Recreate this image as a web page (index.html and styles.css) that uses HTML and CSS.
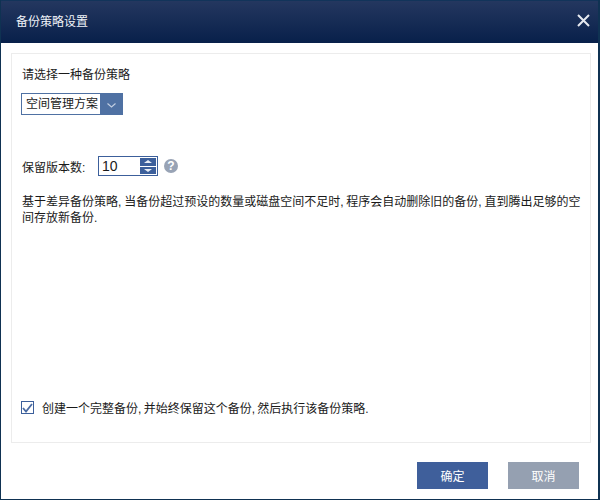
FILE: index.html
```html
<!DOCTYPE html>
<html lang="zh-CN">
<head>
  <meta charset="UTF-8" />
  <title>备份策略设置</title>
  <link rel="stylesheet" href="styles.css">
</head>
<body>
  <div class="dialog">
    <div class="title-bar">
      <span class="title">备份策略设置</span>
      <svg class="close" width="13" height="13" viewBox="0 0 13 13">
        <path d="M1 1L12 12M12 1L1 12" stroke="#e6e9ef" stroke-width="2" fill="none" />
      </svg>
    </div>
    <div class="body">
      <div class="panel">
        <p class="label">请选择一种备份策略</p>
        <div class="select">
          <span class="select-text">空间管理方案</span>
          <span class="select-btn">
            <svg width="9" height="5" viewBox="0 0 9 5">
              <path d="M0.5 0.5L4.5 4L8.5 0.5" stroke="#c3cfe2" stroke-width="1.1" fill="none" />
            </svg>
          </span>
        </div>
        <div class="version-row">
          <span class="version-label">保留版本数:</span>
          <div class="spin">
            <span class="spin-value">10</span>
            <span class="spin-btns">
              <span class="spin-btn"><span class="arrow-up"></span></span>
              <span class="spin-btn"><span class="arrow-down"></span></span>
            </span>
          </div>
          <span class="help">?</span>
        </div>
        <p class="desc">基于差异备份策略, 当备份超过预设的数量或磁盘空间不足时, 程序会自动删除旧的备份, 直到腾出足够的空间存放新备份.</p>
        <div class="check-row">
          <span class="checkbox">
            <svg width="11" height="10" viewBox="0 0 11 10">
              <path d="M1 5L4 8.5L10 1" stroke="#4a6ba3" stroke-width="1.8" fill="none" />
            </svg>
          </span>
          <span>创建一个完整备份, 并始终保留这个备份, 然后执行该备份策略.</span>
        </div>
      </div>
      <div class="footer">
        <button class="btn btn-ok">确定</button>
        <button class="btn btn-cancel">取消</button>
      </div>
    </div>
  </div>
</body>
</html>
```

FILE: styles.css
```css
html, body {
  margin: 0;
  padding: 0;
}
body {
  width: 600px;
  height: 500px;
  overflow: hidden;
  font-family: "Liberation Sans", "Noto Sans CJK SC", sans-serif;
  font-size: 12px;
  color: #1a1a1a;
}
.dialog {
  box-sizing: border-box;
  width: 600px;
  height: 500px;
  border: 1px solid #0f3252;
  border-top: 0;
  border-right-width: 2px;
  display: flex;
  flex-direction: column;
  background: #fff;
}
.title-bar {
  height: 43px;
  flex: none;
  display: flex;
  align-items: center;
  justify-content: space-between;
  padding: 0 8px 4px 15px;
  box-sizing: border-box;
  border-top: 1px solid #12345a;
  background: linear-gradient(#24375f, #08204a);
}
.title {
  color: #f0f3f8;
  font-size: 12px;
}
.body {
  flex: 1;
  display: flex;
  flex-direction: column;
  padding: 10px 7px 10px 10px;
}
.panel {
  box-sizing: border-box;
  height: 390px;
  border: 1px solid #ececec;
  padding: 11px 5px 0 10px;
  display: flex;
  flex-direction: column;
}
.label {
  margin: 2px 0 0;
  line-height: 16px;
}
.select {
  display: flex;
  width: 102px;
  height: 22px;
  margin: 10px 0 0 -1px;
  box-sizing: border-box;
  border: 1px solid #4f71a3;
}
.select-text {
  flex: 1;
  padding-left: 4px;
  line-height: 20px;
  white-space: nowrap;
}
.select-btn {
  width: 22px;
  background: #4f71a3;
  display: flex;
  align-items: center;
  justify-content: center;
  padding-top: 2px;
  box-sizing: border-box;
}
.version-row {
  display: flex;
  align-items: center;
  margin-top: 41px;
}
.version-label {
  width: 76px;
}
.spin {
  box-sizing: border-box;
  width: 60px;
  height: 20px;
  border: 1px solid #3c5f9b;
  display: flex;
  justify-content: space-between;
}
.spin-value {
  padding-left: 3px;
  font-size: 14px;
  line-height: 19px;
}
.spin-btns {
  width: 16px;
  margin: 1px 1px 1px 0;
  display: flex;
  flex-direction: column;
  gap: 1px;
}
.spin-btn {
  flex: 1;
  background: #3c5f9b;
  display: flex;
  align-items: center;
  justify-content: center;
}
.arrow-up {
  border: 4px solid transparent;
  border-top: 0;
  border-bottom: 3px solid #e8edf5;
}
.arrow-down {
  border: 4px solid transparent;
  border-bottom: 0;
  border-top: 3px solid #e8edf5;
}
.help {
  width: 14px;
  height: 14px;
  border-radius: 50%;
  margin-left: 6px;
  background: #98a3b5;
  color: #fff;
  font-size: 12px;
  font-weight: bold;
  line-height: 14px;
  text-align: center;
}
.desc {
  margin: 18px 0 0;
  line-height: 16px;
  word-spacing: -0.5px;
}
.check-row {
  display: flex;
  align-items: center;
  gap: 8px;
  margin: auto 0 26px -1px;
  word-spacing: -1px;
}
.checkbox {
  box-sizing: border-box;
  width: 13px;
  height: 13px;
  border: 1px solid #3c5f9b;
  display: flex;
  align-items: center;
  justify-content: center;
}
.footer {
  display: flex;
  justify-content: flex-end;
  gap: 20px;
  padding: 19px 12px 0 0;
}
.btn {
  width: 71px;
  height: 27px;
  border: 0;
  padding: 0;
  color: #fff;
  font-family: inherit;
  font-size: 12px;
}
.btn-ok {
  background: #3f5f9b;
}
.btn-cancel {
  background: #95a0b1;
}
```
